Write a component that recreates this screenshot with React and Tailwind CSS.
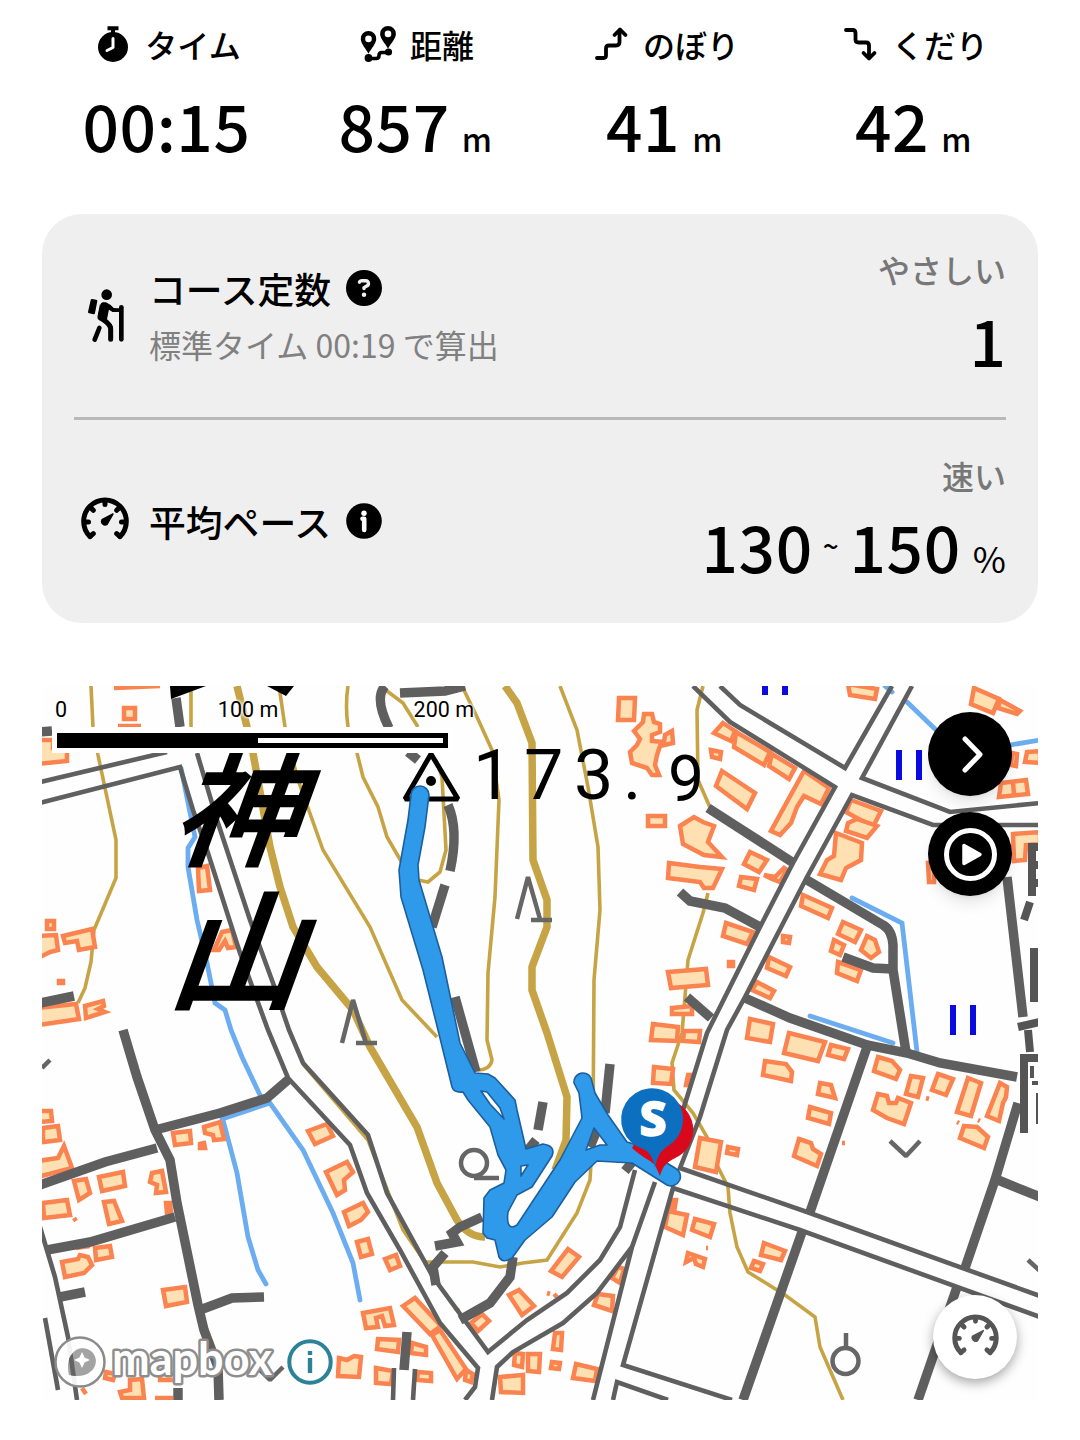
import React from "react";
import { FaCircleQuestion } from "react-icons/fa6";

const buildings = [
  "114,688 160,686", "124,708 135,708 135,719 124,719", "118,726 141,726",
  "38,740 53,740 53,748 67,748 67,761 38,764", "198,868 207,866 210,890 199,891",
  "214,950 222,932 232,930 236,947 228,948 225,941 219,950", "47,921 54,921 54,929 47,929",
  "38,936 56,935 58,950 50,952 38,958", "63,936 92,929 95,947 79,950 77,941 65,943",
  "38,1008 76,1004 79,1019 38,1025", "85,1006 103,1001 104,1006 98,1009 105,1012 86,1018",
  "59,981 63,981 63,983 59,983",
  "619,698 635,698 634,720 618,720",
  "634,731 643,722 644,714 652,714 654,722 660,724 660,732 652,735 652,741 664,742 665,735 672,731 673,743 660,746 657,755 655,765 659,775 652,775 647,768 632,763 630,752 637,745 640,739",
  "648,816 665,816 665,826 648,826",
  "680,826 694,817 703,822 714,826 708,842 722,857 704,855 683,844",
  "669,863 700,867 722,869 713,888 704,888 700,882 668,878",
  "668,972 706,969 708,985 671,988", "672,1008 692,1006 692,1014 672,1014",
  "653,1024 678,1027 677,1041 651,1040", "684,1031 700,1031 699,1042 683,1041",
  "848,684 877,689 875,699 850,695", "723,723 735,731 731,741 714,733",
  "736,732 770,752 764,765 734,747", "772,754 795,768 789,779 769,766",
  "711,750 721,752 720,759 712,757", "722,771 755,793 747,809 716,786",
  "804,771 829,788 821,804 804,796 797,807 791,823 780,835 771,831",
  "851,800 881,811 873,827 846,812", "848,823 857,819 877,826 867,838 846,831",
  "836,833 862,843 861,860 846,868 841,880 820,874 827,860 834,856",
  "750,852 767,860 759,872 744,864", "764,875 775,877 784,868 787,870 780,882 772,879",
  "741,877 757,879 754,890 739,886", "803,895 832,908 828,918 801,906",
  "843,922 861,930 855,942 838,934", "834,940 844,945 840,955 831,951",
  "867,936 875,940 879,952 871,958 861,950", "838,962 861,970 857,981 837,973",
  "726,923 753,932 747,944 723,936", "769,957 790,967 786,976 767,968",
  "757,982 774,991 770,998 752,990", "783,936 790,937 789,943 783,942",
  "729,962 733,962 733,966 729,966", "974,688 999,699 993,713 971,704",
  "1000,700 1020,711 1017,714 998,708", "1012,753 1017,754 1016,766 1011,765",
  "1027,752 1040,751 1040,763 1025,762", "1001,783 1026,780 1028,794 999,797", "1013,782 1014,795",
  "1013,834 1040,832 1040,844 1026,845 1025,860 1014,861", "928,863 934,863 934,882 929,882",
  "750,1019 773,1024 770,1042 747,1038", "789,1033 825,1042 818,1061 784,1053",
  "831,1045 848,1049 844,1059 828,1055", "765,1061 786,1064 792,1072 791,1081 763,1075",
  "820,1083 831,1085 835,1098 818,1094", "810,1107 831,1113 829,1124 808,1118",
  "799,1139 811,1143 813,1149 821,1154 817,1166 794,1156", "878,1057 892,1061 900,1070 896,1079 874,1071",
  "911,1076 923,1078 918,1097 906,1094", "938,1074 953,1079 946,1095 932,1090",
  "968,1078 981,1083 971,1116 957,1112", "1000,1083 1007,1087 1006,1097 1003,1103 999,1121 987,1116",
  "878,1094 887,1096 889,1103 896,1103 898,1098 911,1103 904,1124 887,1118 873,1110",
  "964,1126 977,1127 988,1137 984,1148 960,1138", "700,1138 721,1142 716,1172 695,1167",
  "728,1147 738,1149 737,1155 727,1153", "764,1243 785,1251 781,1260 761,1255",
  "754,1261 763,1264 760,1271 751,1268", "695,1219 714,1224 710,1237 692,1230",
  "668,1211 687,1215 683,1235 665,1227", "672,1200 676,1200 674,1212 670,1211",
  "688,1253 705,1259 703,1267 696,1264 694,1258 686,1262", "706,1248 708,1248",
  "842,1143 845,1143", "926,1098 929,1099", "957,1122 959,1123", "978,1120 980,1121",
  "38,1111 51,1111 52,1121 38,1122", "43,1128 58,1126 60,1140 43,1142",
  "38,1161 58,1158 64,1146 72,1168 38,1177", "74,1181 86,1179 90,1193 79,1200",
  "99,1177 123,1172 125,1186 102,1191", "152,1173 162,1171 166,1192 156,1193 157,1185 150,1182",
  "43,1203 67,1200 70,1215 44,1218", "74,1218 76,1221", "104,1202 114,1201 122,1221 109,1224",
  "166,1203 170,1203 171,1212 167,1213", "173,1133 190,1131 191,1143 175,1145",
  "204,1127 220,1122 224,1139 214,1140 213,1135 205,1133", "200,1144 204,1143 205,1148 200,1148",
  "308,1131 327,1124 333,1136 315,1144",
  "326,1172 347,1162 353,1172 344,1180 345,1190 337,1195", "344,1212 363,1203 368,1212 361,1220 349,1226",
  "357,1242 368,1239 372,1254 361,1257", "62,1262 78,1259 80,1255 88,1257 92,1265 84,1273 65,1277",
  "95,1248 110,1246 112,1257 96,1260", "76,1248 90,1246", "163,1290 185,1287 187,1302 166,1306",
  "363,1313 390,1308 394,1325 385,1326 382,1316 376,1318 378,1327 366,1328",
  "339,1358 347,1360 354,1356 361,1357 359,1377 338,1376", "385,1259 396,1255 400,1266 390,1270",
  "403,1306 415,1298 441,1326 430,1334", "432,1335 440,1330 466,1369 457,1379",
  "378,1339 399,1340 398,1352 377,1349", "412,1343 426,1347 426,1355 411,1353",
  "376,1368 393,1371 391,1384 376,1383", "418,1372 431,1373 431,1381 417,1380",
  "466,1370 473,1374 471,1382 465,1380", "500,1377 523,1375 523,1393 501,1392",
  "509,1295 519,1290 534,1306 522,1315", "568,1249 579,1257 562,1277 551,1271",
  "471,1323 482,1314 489,1321 478,1331", "555,1333 562,1333 561,1350 553,1349",
  "552,1362 560,1363 559,1369 551,1368", "528,1354 540,1354 539,1372 528,1371",
  "515,1353 523,1354 522,1367 514,1365", "576,1364 597,1369 595,1381 573,1378",
  "598,1294 613,1296 612,1311 594,1305", "618,1267 624,1269 620,1283 612,1278",
  "654,1067 673,1069 671,1084 653,1083", "688,1075 690,1075 688,1085 686,1085",
  "547,1293 550,1294", "554,1294 557,1297", "455,1308 459,1311",
  "106,1372 115,1374 113,1380 105,1378", "120,1392 130,1390 130,1380 142,1379 144,1398 122,1398",
  "160,1374 175,1374 175,1380 160,1380", "155,1398 173,1398", "82,1388 86,1394",
];

const thinContours = [
  "M91,686 L93,727 98,755 116,840 116,878 94,930 91,962 85,988 78,1003",
  "M191,690 V727",
  "M279,686 L285,727 297,777 323,850 370,927 402,1000 437,1037",
  "M348,686 Q345,705 348,727 L357,753 363,777 378,807 387,837 405,868",
  "M462,686 L477,717 492,750 499,800 495,897 488,973 487,1040 492,1060 Q490,1070 478,1070",
  "M560,686 L577,730 588,787 598,847 600,910 594,980 593,1130 590,1180 577,1213 547,1260 523,1263 500,1267 473,1262 425,1262 403,1230 390,1197 368,1140 303,1064",
  "M383,688 L403,703 418,727",
  "M436,760 L442,777 446,850 440,872 428,882 418,880",
  "M703,686 L697,710 698,780 712,812",
  "M708,893 L703,913 688,960 682,1033 672,1063 674,1090 693,1113 707,1137 718,1167 728,1187 730,1213 737,1247 748,1272 785,1295 815,1317 820,1347 843,1400",
];

const thickContours = [
  "M237,686 L247,727 253,753 270,847 280,887 293,927 317,967 353,1010 370,1047 417,1127 437,1183 457,1220 Q468,1237 485,1237",
  "M505,686 L517,703 532,743 533,860 547,900 547,927 532,967 532,990 547,1033 567,1097 566,1140 555,1170",
];

const streams = [
  "M181,768 L195,837 188,848 188,867 197,920 207,963 215,1003 225,1010 231,1030 242,1057 260,1095",
  "M222,1119 L270,1103 303,1150 333,1213 353,1263 360,1300",
  "M223,1120 L237,1173 248,1237 258,1270 266,1284",
  "M852,898 L902,923 917,1052",
  "M810,1016 L893,1043",
  "M907,702 L935,729",
  "M1010,745 L1040,740",
  "M885,686 L892,692",
];

// main roads are drawn as two thin border lines
const roadEdges = [
  "M40,782 L167,752",
  "M40,803 L180,767 193,810 207,850 240,953 268,1030 288,1078 350,1145 367,1193 400,1250 440,1323 478,1368 475,1387 465,1400",
  "M197,753 L217,820 250,920 273,983 289,1030 303,1063 368,1135 387,1193 433,1277 488,1352 527,1320 567,1293 600,1260 620,1227 635,1170",
  "M492,1400 L497,1367 513,1352 563,1323 597,1293 632,1247",
  "M593,1400 L632,1247 655,1182",
  "M732,1400 L623,1365 673,1188 800,1230 1040,1317",
  "M613,1400 L617,1382 668,1400",
  "M669,1155 L707,1033 760,927 793,863 835,787 730,722 693,686",
  "M1040,1296 L807,1212 680,1168 700,1117 727,1030 745,997 807,877 852,795 933,825 1040,825",
  "M720,686 L740,705 845,768 892,686",
  "M912,686 L862,778 950,812 1040,803",
  "M40,1227 L55,1277 68,1337 77,1400",
  "M45,1318 L58,1390",
  "M394,1368 L393,1400",
  "M415,1369 L413,1400",
];

const lanes = [
  "M708,808 L792,862",
  "M680,892 L690,901 725,908 760,927",
  "M687,997 L711,1018",
  "M807,880 L883,925 Q892,930 893,945 L893,970 906,1052",
  "M843,957 L873,968 893,969",
  "M745,998 L790,1018 867,1045 907,1053 940,1063 1017,1077",
  "M867,1047 L810,1212",
  "M802,1232 L743,1400",
  "M1018,1103 L995,1180 965,1268",
  "M998,1180 L1040,1197",
  "M957,1287 L918,1400",
  "M1007,877 L1023,1017",
  "M123,1030 L137,1077 155,1130 170,1160 177,1203 198,1305 204,1330 218,1367 219,1400",
  "M155,1130 L220,1113 267,1098 289,1079",
  "M40,1185 L105,1162 157,1148",
  "M47,1250 L90,1242 175,1217",
  "M60,1297 L85,1292",
  "M200,1310 L232,1298 264,1297",
  "M178,1388 V1400",
  "M176,698 L180,727",
  "M40,1003 L74,996",
  "M40,732 L52,731",
];

const footpaths = [
  "M385,686 Q374,698 389,728",
  "M400,693 L445,691 465,686",
  "M408,752 L418,760",
  "M448,805 Q459,830 450,871",
  "M445,885 L432,927",
  "M455,997 L476,1072",
  "M543,1102 L538,1130",
  "M610,1064 L605,1113",
  "M536,1140 L528,1150",
  "M597,1130 L590,1147",
  "M633,1161 L625,1171",
  "M482,1217 L460,1227 452,1233 457,1242 435,1246",
  "M445,1253 L433,1267 436,1285",
  "M513,1257 L510,1277 490,1303 460,1320",
  "M407,1332 L404,1370",
];

// outline of the walked track, the small loops are cut out with evenodd
const trackOutline =
  "M411,795 A9,9 0 0 1 429,795 L425,827 418,865 419,880 442,957 460,1043 475,1073 488,1074 495,1078 515,1100 517,1110 526,1149 543,1144 Q556,1146 552,1156 L532,1187 517,1195 508,1212 Q506,1227 513,1227 L517,1225 560,1160 582,1118 579,1093 574,1083 A9,9 0 0 1 591,1078 L595,1093 608,1115 627,1142 637,1145 675,1168 A9,9 0 0 1 667,1185 L632,1163 597,1161 575,1182 552,1217 525,1240 512,1258 Q503,1264 499,1257 L495,1240 487,1238 483,1233 484,1198 490,1190 504,1183 506,1170 498,1155 490,1127 468,1100 463,1092 Q454,1093 452,1087 L438,1030 423,970 401,897 399,870 408,820 Z M481,1091 L487,1092 500,1108 504,1119 490,1104 Z M521,1166 L528,1165 521,1176 Z M594,1128 L607,1145 600,1145 586,1150 Z";

const TimeIcon = () => (
  <svg className="h-9 w-9" viewBox="0 0 36 36">
    <circle cx="18" cy="21" r="15" />
    <path d="M12.500 2.200h11M18 3v5" stroke="black" strokeWidth="4" fill="none" />
    <path d="M18 12.500v9l-6 3" fill="none" stroke="white" strokeWidth="3" strokeLinecap="round" strokeLinejoin="round" />
  </svg>
);

const DistanceIcon = () => (
  <svg className="h-9 w-9" viewBox="0 0 36 36">
    <path fillRule="evenodd" d="M8.500 5a7.700 7.700 0 0 0-7.700 8c0 4.600 5 9.600 7.700 14.700 2.700-5.100 7.700-10.100 7.700-14.700a7.700 7.700 0 0 0-7.700-8Zm0 4.600a3.300 3.300 0 1 1 0 6.600 3.300 3.300 0 0 1 0-6.600ZM28 0a7.900 7.900 0 0 0-7.900 7.900c0 4.800 5.200 9.300 7.900 14.800 2.700-5.500 7.900-10 7.900-14.800A7.900 7.900 0 0 0 28 0Zm0 4.600a3.300 3.300 0 1 1 0 6.600 3.300 3.300 0 0 1 0-6.600Z" />
    <circle cx="8.500" cy="32" r="3.900" />
    <circle cx="28.500" cy="26" r="3.600" />
    <path d="M9 32.500h7q3 0 3-3t3-3h6" fill="none" stroke="black" strokeWidth="3.600" />
  </svg>
);

const UpIcon = () => (
  <svg className="h-9 w-9" viewBox="0 0 36 36" fill="none" stroke="black" strokeWidth="3.800" strokeLinecap="round" strokeLinejoin="round">
    <path d="M4 32h6.500q2.500 0 2.500-2.500v-7q0-3 3-3h7q3.500 0 3.500-3.500V4M21.500 9l5.500-5.500L32.500 9" />
  </svg>
);

const DownIcon = () => (
  <svg className="h-9 w-9" viewBox="0 0 36 36" fill="none" stroke="black" strokeWidth="3.800" strokeLinecap="round" strokeLinejoin="round">
    <path d="M4 4h6.500q3 0 3 3v6.500q0 3 3 3h7.500q3 0 3 3V32M21.500 27l5.500 5.500L32.500 27" />
  </svg>
);

const HikerIcon = () => (
  <svg className="h-[54px] w-[38px]" viewBox="0 0 114 162" strokeLinecap="round" strokeLinejoin="round">
    <circle cx="59" cy="17" r="16" />
    <path d="M15 34l12 2-7 36-13-3Z" stroke="black" strokeWidth="8" />
    <path d="M42 44q5-5 15-4l14 8 9 9 17 2v9H78l-12-7-6 30 13 13q5 6 5 14v31M60 91L37 94q-6-6-5-14l7-36Z" stroke="none" />
    <path d="M50 48l15 8 13 8 22-1" fill="none" stroke="black" strokeWidth="10" />
    <path d="M48 48l-9 38 14 9q18 13 18 26v30" fill="none" stroke="black" strokeWidth="15" />
    <path d="M37 117l-14 35" fill="none" stroke="black" strokeWidth="14" />
    <path d="M103 55v96" fill="none" stroke="black" strokeWidth="14" />
  </svg>
);

const GaugeIcon = ({ className }) => (
  <svg className={className} viewBox="0 0 48 42" fill="none" stroke="currentColor" strokeWidth="5" strokeLinecap="round">
    <path d="M9 38.500a21.300 21.300 0 1 1 30 0" />
    <path d="M9 38.500l3.300-2.800M39 38.500l-3.300-2.800M4 24h3.500M40.500 24h3.500M24 4v2.500M10.500 10.500l1.800 1.800M37.500 10.500l-1.800 1.800" />
    <path d="M32 16L26 26.400a3.600 3.600 0 0 1-5-4.700Z" fill="currentColor" strokeWidth="1.500" strokeLinejoin="round" />
  </svg>
);

const InfoIcon = () => (
  <svg className="h-9 w-9" viewBox="0 0 36 36">
    <circle cx="18" cy="18" r="17.800" />
    <circle cx="18" cy="10.200" r="2.700" fill="white" />
    <path d="M16.500 15.800h1.700v11.200" fill="none" stroke="white" strokeWidth="4.600" strokeLinecap="round" strokeLinejoin="round" />
  </svg>
);

const stats = [
  { label: "タイム", value: "00:15", icon: <TimeIcon /> },
  { label: "距離", value: "857", unit: "m", icon: <DistanceIcon /> },
  { label: "のぼり", value: "41", unit: "m", icon: <UpIcon /> },
  { label: "くだり", value: "42", unit: "m", icon: <DownIcon /> },
];

const Stat = ({ label, value, unit, icon }) => (
  <div className="flex flex-col items-center">
    <div className="flex h-12 items-center gap-[14px] pl-[3px] text-[32px] leading-[48px]">
      {icon}
      <span>{label}</span>
    </div>
    <div className="mt-[11px] flex items-baseline gap-[12px] text-[64px] leading-[90px] tracking-[0.01em]">
      <span>{value}</span>
      {unit && <span className="text-[32px]">{unit}</span>}
    </div>
  </div>
);

const MapDrawing = () => (
  <svg className="block h-[714px] w-[996px]" viewBox="42 686 996 714">
    <rect x="42" y="686" width="996" height="714" fill="#fefefe" />
    <g fill="none" stroke="#c6a445">
      {thinContours.map((d) => <path key={d} d={d} strokeWidth="3.6" />)}
      {thickContours.map((d) => <path key={d} d={d} strokeWidth="7.5" />)}
    </g>
    <g fill="none" stroke="#6badf0" strokeWidth="4.8" strokeLinecap="round">
      {streams.map((d) => <path key={d} d={d} />)}
    </g>
    <g fill="#ffe0b2" stroke="#fb8350" strokeWidth="4.5">
      {buildings.map((p) => <polygon key={p} points={p} />)}
    </g>
    <g fill="none" stroke="#5f5f5f">
      {roadEdges.map((d) => <path key={d} d={d} strokeWidth="4.6" />)}
      {lanes.map((d) => <path key={d} d={d} strokeWidth="9.5" />)}
      {footpaths.map((d) => <path key={d} d={d} strokeWidth="9.5" />)}
    </g>
    {/* vegetation symbols */}
    <g fill="none" stroke="#666" strokeWidth="4.5" strokeLinejoin="bevel">
      <path d="M517,919 L528,877 540,919 M531,920 H552" />
      <path d="M342,1043 L353,1000 366,1043 M356,1043 H377" />
      <circle cx="474" cy="1163" r="13" />
      <path d="M474,1178 H499" />
      <circle cx="845.500" cy="1361" r="13" />
      <path d="M846,1333 V1348" />
      <path d="M890,1141 L906,1156 920,1141 M1028,1260 L1040,1271 M260,1370 L270,1380 283,1367 M42,1068 L50,1060" />
    </g>
    <g fill="#0b0be0">
      <rect x="762" y="686" width="6" height="9" />
      <rect x="782" y="686" width="6" height="9" />
      <rect x="896" y="750" width="6" height="30" />
      <rect x="916" y="750" width="6" height="30" />
      <rect x="950" y="1005" width="6" height="30" />
      <rect x="970" y="1005" width="6" height="30" />
    </g>
    {/* place name cut off at the right edge */}
    <g fill="none" stroke="#555" strokeWidth="8">
      <path d="M1032,843 V896 M1036,847 H1040 M1036,865 H1040 M1036,883 H1040 M1030,902 L1024,920 M1034,948 V1002 M1018,1027 L1040,1022 M1028,1030 L1030,1052" />
      <path d="M1024,1133 V1058 H1040" />
      <path d="M1032,1066 V1078 M1032,1083 H1040 M1038,1093 V1124" strokeWidth="4" />
    </g>
    <path d="M170,686 H206 L171,699 Z M267,686 H294 L286,696 Z" />
    <g
      fontSize="126"
      fontWeight="500"
      fontFamily="'Noto Sans CJK JP', sans-serif"
      stroke="black"
      strokeWidth="2"
    >
      <text transform="translate(170 856) skewX(-20)">神</text>
      <text transform="translate(166 1000) skewX(-20) scale(1.06 1.04)">山</text>
    </g>
    <g fontFamily="Roboto, sans-serif" fontSize="70" fontWeight="400">
      <text x="473 524 574 623" y="799">173.</text>
      <text x="668" y="801" fontSize="64">9</text>
    </g>
    <path d="M431,754 L405,799 H458 Z" fill="none" stroke="black" strokeWidth="5" strokeLinejoin="bevel" />
    <circle cx="431" cy="781" r="5" />

    <path d={trackOutline} fillRule="evenodd" fill="#2f99ea" stroke="#1d5f9e" strokeWidth="1.6" strokeLinejoin="round" />

    <path d="M660,1176 L655,1165 C650,1160 640,1156 632,1148 L660,1099 A31,31 0 0 1 679,1156 C668,1162 664,1163 660,1176 Z" fill="#d9091b" />
    <path d="M655,1168 C653,1158 650,1152 643,1149 A31,31 0 1 1 668,1146 C660,1151 657,1157 655,1168 Z" fill="#0c6fc0" />
    <text x="653" y="1136" textAnchor="middle" fill="white" stroke="white" strokeWidth="1.5" fontFamily="'Noto Sans', sans-serif" fontSize="48" fontWeight="800">S</text>
  </svg>
);

const MapboxLogo = () => (
  <div className="absolute bottom-[4px] left-[11px] flex items-center">
    <svg className="h-[68px] w-[234px]" viewBox="0 0 234 68">
      <path
        fillRule="evenodd"
        d="M27 9.500a24.500 24.500 0 1 1 0 49 24.500 24.500 0 0 1 0-49ZM16 47c8 2 17 1 21-3a13 13 0 1 0-18-18c-4 4-5 13-3 21Z"
        fill="white"
        fillOpacity="0.92"
      />
      <circle cx="27" cy="34" r="24.500" fill="none" stroke="#8a8a8a" strokeWidth="2.500" />
      <path d="M16 47c8 2 17 1 21-3a13 13 0 1 0-18-18c-4 4-5 13-3 21Z" fill="#666" fillOpacity="0.6" />
      <path d="M29 24l2.600 5.400L37 32l-5.400 2.600L29 40l-2.600-5.400L21 32l5.400-2.600Z" fill="white" />
      <text
        x="59"
        y="47"
        textLength="160"
        lengthAdjust="spacingAndGlyphs"
        fontFamily="Lato, sans-serif"
        fontSize="45"
        fontWeight="700"
        fill="white"
        stroke="#8d8d8d"
        strokeWidth="5"
        strokeLinejoin="round"
        paintOrder="stroke"
      >
        mapbox
      </text>
    </svg>
    <svg className="h-[46px] w-[46px]" viewBox="0 0 46 46">
      <circle cx="23" cy="23" r="20.700" fill="white" stroke="#2c8397" strokeWidth="4" />
      <rect x="20.800" y="12" width="4.400" height="4" fill="#2c8397" />
      <rect x="20.800" y="19" width="4.400" height="15" fill="#2c8397" />
    </svg>
  </div>
);

const ScaleBar = () => (
  <div className="absolute left-[10px] top-[10px] w-[422px]">
    <div className="flex h-[31px] items-start text-[21.500px] font-normal leading-[28px] [font-family:Roboto,sans-serif] [text-shadow:0_0_3px_#fff,0_0_3px_#fff,0_0_3px_#fff]">
      <span className="w-[166px] pl-[3px]">0</span>
      <span className="w-[196px]">100 m</span>
      <span className="whitespace-nowrap">200 m</span>
    </div>
    <div className="w-[401px] bg-white px-[5px] pb-[5px] pt-[6px]">
      <div className="flex h-[15px] items-center justify-end bg-black pr-[5px]">
        <div className="h-[5px] w-[185px] bg-white" />
      </div>
    </div>
  </div>
);

export default function App() {
  return (
    <div className="h-[1440px] w-[1080px] overflow-hidden bg-white px-[42px] pt-[20px] font-medium text-black [font-family:'Noto_Sans_CJK_JP',sans-serif]">
      <div className="grid h-[194px] grid-cols-4">
        {stats.map((s) => (
          <Stat key={s.label} {...s} />
        ))}
      </div>

      <div className="h-[409px] rounded-[40px] bg-[#efefef] px-8">
        <div className="flex h-[203px] justify-between">
          <div className="flex items-center">
            <div className="flex w-[75px] justify-center pr-[11px] pt-[1px]">
              <HikerIcon />
            </div>
            <div className="flex flex-col">
              <div className="flex items-center gap-[15px] text-[36.800px] leading-[56px]">
                <span>コース定数</span>
                <FaCircleQuestion className="h-9 w-9" />
              </div>
              <div className="text-[32px] font-normal leading-[56px] text-[#808080]">標準タイム 00:19 で算出</div>
            </div>
          </div>
          <div className="flex flex-col items-end pt-[31px]">
            <div className="text-[32px] leading-[48px] text-[#777]">やさしい</div>
            <div className="text-[64px] leading-[92px]">1</div>
          </div>
        </div>
        <div className="h-[3px] bg-[#b8b8b8]" />
        <div className="flex h-[203px] justify-between">
          <div className="flex items-center">
            <div className="w-[75px] pb-[6px] pl-[7px]">
              <GaugeIcon className="h-[42px] w-[48px] overflow-visible" />
            </div>
            <div className="flex items-center gap-[15px] pb-[2px] text-[36.800px] leading-[56px]">
              <span>平均ペース</span>
              <InfoIcon />
            </div>
          </div>
          <div className="flex flex-col items-end pt-[31px]">
            <div className="text-[32px] leading-[48px] text-[#777]">速い</div>
            <div className="flex items-baseline text-[64px] leading-[92px] tracking-[0.01em]">
              <span>130</span>
              <span className="mx-[10px] pb-[12px] text-[28px] leading-[40px] [align-self:center]">~</span>
              <span>150</span>
              <span className="ml-3 text-[36px] font-normal tracking-normal">%</span>
            </div>
          </div>
        </div>
      </div>

      <div className="relative mt-[63px] h-[714px] overflow-hidden">
        <MapDrawing />
        <ScaleBar />
        <MapboxLogo />
        <div className="absolute right-[26px] top-[26px] flex flex-col gap-4">
          <button className="flex h-[84px] w-[84px] items-center justify-center rounded-full bg-black shadow-lg">
            <svg className="h-[84px] w-[84px]" viewBox="0 0 84 84" fill="none" stroke="white" strokeWidth="5" strokeLinecap="round" strokeLinejoin="round">
              <path d="M37 27l15 15.500L37 58" />
            </svg>
          </button>
          <button className="flex h-[84px] w-[84px] items-center justify-center rounded-full bg-black shadow-lg">
            <svg className="h-[84px] w-[84px]" viewBox="0 0 84 84">
              <circle cx="42.500" cy="42.500" r="24" fill="none" stroke="white" strokeWidth="5" />
              <path d="M36 33.500v18l16-9Z" fill="white" stroke="white" strokeWidth="3.500" strokeLinejoin="round" />
            </svg>
          </button>
        </div>
        <button className="absolute bottom-[21px] right-[21px] flex h-[84px] w-[84px] items-center justify-center rounded-full bg-white pb-[3px] text-[#555] shadow-[0_4px_12px_rgba(0,0,0,0.35)]">
          <GaugeIcon className="h-[41px] w-[47px] overflow-visible" />
        </button>
      </div>
    </div>
  );
}
